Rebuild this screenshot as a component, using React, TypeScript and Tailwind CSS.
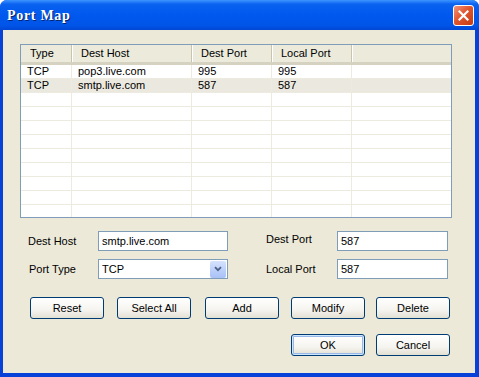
import type { ReactNode } from "react";

type Row = { type: string; host: string; dest: string; local: string; selected?: boolean };

const rows: Row[] = [
  { type: "TCP", host: "pop3.live.com", dest: "995", local: "995" },
  { type: "TCP", host: "smtp.live.com", dest: "587", local: "587", selected: true },
];

// column widths in px: Type, Dest Host, Dest Port, Local Port, filler
const cols = ["w-[51px]", "w-[120px]", "w-[80px]", "w-[80px]", "flex-1"];

function XpButton({ children, isDefault }: { children: ReactNode; isDefault?: boolean }) {
  return (
    <button
      type="button"
      className={
        "h-[22px] w-[74px] rounded-[3px] border border-[#003c74] bg-[linear-gradient(to_bottom,#ffffff_0%,#f5f4ef_60%,#e3e0d3_100%)] text-[11px] text-black " +
        (isDefault ? "[box-shadow:inset_0_0_0_1px_#cee7ff,inset_0_0_0_2px_#98b8ea]" : "")
      }
    >
      {children}
    </button>
  );
}

function Field({ value }: { value: string }) {
  return (
    <div className="flex h-[20px] items-center border border-[#7f9db9] bg-white pl-[3px] text-[11px]">
      {value}
    </div>
  );
}

export default function App() {
  const blank = Array.from({ length: 9 });

  return (
    <div className="flex h-[377px] w-[479px] flex-col overflow-hidden rounded-t-[7px] bg-[#0841d8] font-['Liberation_Sans',Arial,sans-serif] text-[11px] text-black">
      {/* title bar */}
      <div className="flex h-[30px] shrink-0 items-center justify-between bg-[linear-gradient(to_bottom,#3d95ff_0%,#0a62f0_14%,#0058ee_50%,#0055e8_85%,#0046d4_100%)] pl-[7px] pr-[5px]">
        <span className="font-['Liberation_Serif',serif] text-[14px] font-bold tracking-[0.7px] text-white [text-shadow:1px_1px_#0a246a]">
          Port Map
        </span>
        <div className="flex h-[21px] w-[21px] items-center justify-center rounded-[3px] border border-white bg-[linear-gradient(135deg,#f0947a_0%,#e2562f_45%,#c73b12_100%)]">
          <svg width="11" height="11" viewBox="0 0 11 11">
            <path d="M1.5 1.5 L9.5 9.5 M9.5 1.5 L1.5 9.5" stroke="white" strokeWidth="2.2" strokeLinecap="square" />
          </svg>
        </div>
      </div>

      {/* body */}
      <div className="mb-[4px] ml-[3px] mr-[4px] flex flex-1 flex-col bg-[#ece9d8] pl-[17px] pt-[14px]">
        {/* list view */}
        <div className="flex h-[174px] w-[432px] flex-col overflow-hidden border border-[#7f9db9] bg-white">
          <div className="flex h-[20px] shrink-0 border-b-[3px] border-[#d6d2c2] bg-[#ebeadb]">
            {["Type", "Dest Host", "Dest Port", "Local Port", ""].map((h, i) => (
              <div
                key={i}
                className={
                  cols[i] +
                  " flex items-center pl-[9px] " +
                  (i < 4 ? "border-r border-[#c7c5b2] shadow-[1px_0_0_#ffffff]" : "")
                }
              >
                {h}
              </div>
            ))}
          </div>
          {rows.map((r, i) => (
            <div key={i} className={"flex h-[14px] shrink-0 border-b border-[#edebe0] " + (r.selected ? "bg-[#ebe9df]" : "")}>
              {[r.type, r.host, r.dest, r.local, ""].map((c, j) => (
                <div
                  key={j}
                  className={cols[j] + " flex items-center pl-[6px] leading-none " + (j < 4 ? "border-r border-[#edebe0]" : "")}
                >
                  {c}
                </div>
              ))}
            </div>
          ))}
          {blank.map((_, i) => (
            <div key={"b" + i} className="flex h-[14px] shrink-0 border-b border-[#edebe0]">
              {cols.map((c, j) => (
                <div key={j} className={c + (j < 4 ? " border-r border-[#edebe0]" : "")} />
              ))}
            </div>
          ))}
        </div>

        {/* form */}
        <div className="mt-[13px] flex flex-col gap-[8px] pl-[8px]">
          <div className="flex items-center">
            <span className="w-[70px]">Dest Host</span>
            <div className="w-[130px]">
              <Field value="smtp.live.com" />
            </div>
            <span className="ml-[38px] w-[71px] -translate-y-[2px]">Dest Port</span>
            <div className="w-[111px]">
              <Field value="587" />
            </div>
          </div>
          <div className="flex items-center">
            <span className="w-[70px] pl-[1px]">Port Type</span>
            <div className="flex h-[20px] w-[130px] items-center justify-between border border-[#7f9db9] bg-white pl-[3px] pr-[1px]">
              <span>TCP</span>
              <div className="flex h-[17px] w-[16px] items-center justify-center rounded-[2px] bg-[linear-gradient(to_bottom,#d6e3fd_0%,#b9cdfa_60%,#a9c1f6_100%)]">
                <svg width="8" height="6" viewBox="0 0 8 6">
                  <path d="M1 1.2 L4 4.2 L7 1.2" fill="none" stroke="#4d6185" strokeWidth="1.8" />
                </svg>
              </div>
            </div>
            <span className="ml-[38px] w-[71px]">Local Port</span>
            <div className="w-[111px]">
              <Field value="587" />
            </div>
          </div>
        </div>

        {/* action buttons */}
        <div className="mt-[18px] flex pl-[10px]">
          <XpButton>Reset</XpButton>
          <div className="ml-[13px]">
            <XpButton>Select All</XpButton>
          </div>
          <div className="ml-[14px]">
            <XpButton>Add</XpButton>
          </div>
          <div className="ml-[12px]">
            <XpButton>Modify</XpButton>
          </div>
          <div className="ml-[11px]">
            <XpButton>Delete</XpButton>
          </div>
        </div>

        <div className="mt-[15px] flex pl-[271px]">
          <XpButton isDefault>OK</XpButton>
          <div className="ml-[11px]">
            <XpButton>Cancel</XpButton>
          </div>
        </div>
      </div>
    </div>
  );
}
